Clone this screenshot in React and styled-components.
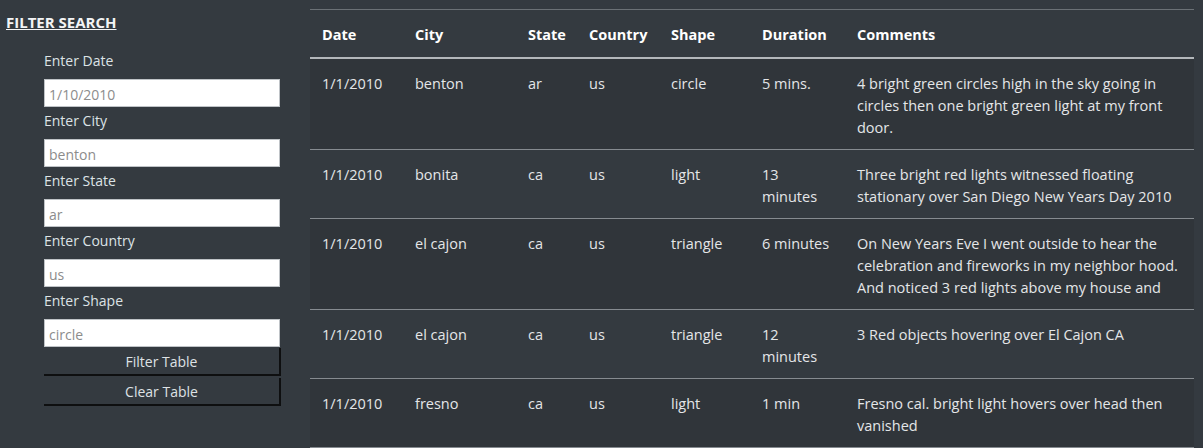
import React from "react";
import styled, { createGlobalStyle } from "styled-components";

const Global = createGlobalStyle`
  html, body { margin: 0; padding: 0; background: #343a40; }
  body { font-family: "Open Sans", "Noto Sans", sans-serif; color: #e4e6e8; }
  * { box-sizing: border-box; }
`;

const Page = styled.div`
  display: flex;
  align-items: flex-start;
  width: 1203px;
  height: 448px;
  overflow: hidden;
  background: #343a40;
`;

const Sidebar = styled.aside`
  width: 310px;
  flex: none;
  padding: 12px 0 0 6px;
`;

const Title = styled.div`
  font-size: 15px;
  font-weight: 700;
  color: #f3f4f5;
  text-decoration: underline;
  line-height: 20px;
`;

const Form = styled.form`
  display: flex;
  flex-direction: column;
  width: 237px;
  margin: 18px 0 0 38px;
`;

const Label = styled.label`
  font-size: 14px;
  line-height: 22px;
  color: #dde3e6;
  margin-bottom: 7px;
`;

const Input = styled.input`
  height: 28px;
  width: 236px;
  border: 1px solid #bfc3c7;
  background: #fff;
  color: #8c8c8c;
  font-family: inherit;
  font-size: 14px;
  padding: 2px 4px 0;
  margin: 0 0 3px 0;
  outline: none;
  &:last-of-type { margin-bottom: 0; }
`;

const Button = styled.button`
  height: 28px;
  width: 237px;
  margin-top: ${(p) => (p.$first ? "1px" : "2px")};
  background: #343a40;
  color: #dfe2e5;
  font-family: inherit;
  font-size: 14px;
  border: none;
  border-right: 2px solid #0e0f10;
  border-bottom: 2px solid #0e0f10;
  padding: 0;
`;

const Main = styled.main`
  flex: 1;
  padding: 9px 9px 0 0;
`;

const Table = styled.table`
  width: 884px;
  border-collapse: collapse;
  table-layout: fixed;
  font-size: 14.5px;
  line-height: 22px;
`;

const Th = styled.th`
  text-align: left;
  font-weight: 700;
  color: #ffffff;
  padding: 14px 12px 11px;
  border-top: 1px solid #6b7176;
  border-bottom: 2px solid #b3b7bb;
  vertical-align: bottom;
`;

const Tr = styled.tr`
  background: ${(p) => (p.$striped ? "#30353a" : "transparent")};
  border-bottom: 1px solid #868b90;
`;

const Td = styled.td`
  padding: 14px 12px 10px;
  vertical-align: top;
  color: #e4e6e8;
`;

const fields = [
  ["Enter Date", "1/10/2010"],
  ["Enter City", "benton"],
  ["Enter State", "ar"],
  ["Enter Country", "us"],
  ["Enter Shape", "circle"],
];

const cols = [93, 113, 61, 82, 91, 95, 349];
const heads = ["Date", "City", "State", "Country", "Shape", "Duration", "Comments"];

const rows = [
  ["1/1/2010", "benton", "ar", "us", "circle", "5 mins.", "4 bright green circles high in the sky going in circles then one bright green light at my front door."],
  ["1/1/2010", "bonita", "ca", "us", "light", "13 minutes", "Three bright red lights witnessed floating stationary over San Diego New Years Day 2010"],
  ["1/1/2010", "el cajon", "ca", "us", "triangle", "6 minutes", "On New Years Eve I went outside to hear the celebration and fireworks in my neighbor hood. And noticed 3 red lights above my house and"],
  ["1/1/2010", "el cajon", "ca", "us", "triangle", "12 minutes", "3 Red objects hovering over El Cajon CA"],
  ["1/1/2010", "fresno", "ca", "us", "light", "1 min", "Fresno cal. bright light hovers over head then vanished"],
];

export default function App() {
  return (
    <>
      <Global />
      <Page>
        <Sidebar>
          <Title>FILTER SEARCH</Title>
          <Form onSubmit={(e) => e.preventDefault()}>
            {fields.map(([label, value]) => (
              <React.Fragment key={label}>
                <Label>{label}</Label>
                <Input defaultValue={value} />
              </React.Fragment>
            ))}
            <Button $first type="button">Filter Table</Button>
            <Button type="button">Clear Table</Button>
          </Form>
        </Sidebar>
        <Main>
          <Table>
            <colgroup>
              {cols.map((w, i) => (
                <col key={i} style={{ width: w }} />
              ))}
            </colgroup>
            <thead>
              <tr>
                {heads.map((h) => (
                  <Th key={h}>{h}</Th>
                ))}
              </tr>
            </thead>
            <tbody>
              {rows.map((r, i) => (
                <Tr key={i} $striped={i % 2 === 0}>
                  {r.map((c, j) => (
                    <Td key={j}>{c}</Td>
                  ))}
                </Tr>
              ))}
            </tbody>
          </Table>
        </Main>
      </Page>
    </>
  );
}
